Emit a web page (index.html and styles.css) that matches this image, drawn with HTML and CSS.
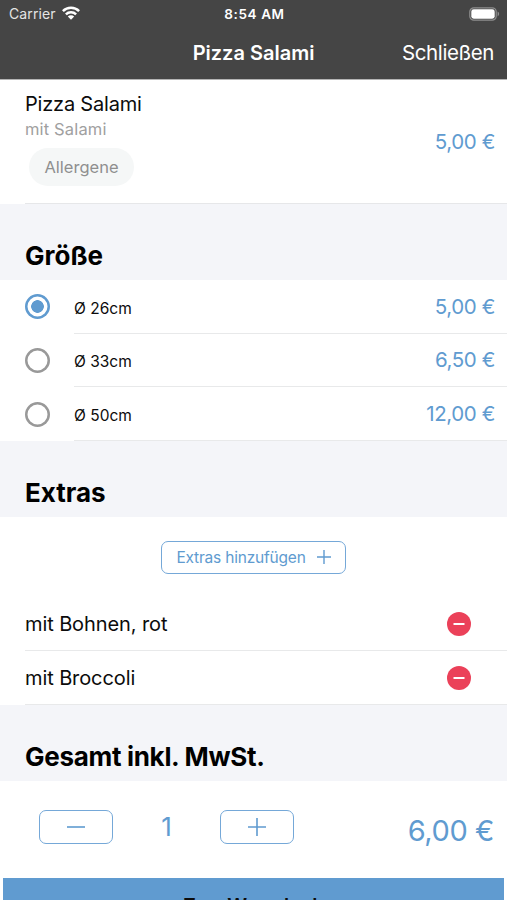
FILE: index.html
```html
<!DOCTYPE html>
<html lang="de">
  <head>
    <meta charset="UTF-8" />
    <meta name="viewport" content="width=device-width, initial-scale=1.0" />
    <title>Pizza Salami</title>
    <link rel="stylesheet" href="styles.css">
  </head>
  <body>
    <header class="header">
      <div class="status">
        <div class="carrier">
          <span>Carrier</span>
          <svg class="wifi" width="18" height="14" viewBox="0 0 18 14">
            <g fill="none" stroke="#fff" stroke-width="2.5">
              <path d="M0.9 5.1a11.5 11.5 0 0 1 16.2 0" />
              <path d="M3.9 8.4a7.3 7.3 0 0 1 10.2 0" />
            </g>
            <path d="M9 13.8 5.8 10.6a4.5 4.5 0 0 1 6.4 0z" fill="#fff" />
          </svg>
        </div>
        <span class="time">8:54 AM</span>
        <svg class="battery" width="31" height="14" viewBox="0 0 31 14">
          <rect x="0.8" y="0.8" width="26.4" height="12.4" rx="4" fill="none" stroke="#8f8f8f" stroke-width="1.2" />
          <rect x="2.3" y="2.3" width="23.4" height="9.4" rx="2.4" fill="#fff" />
          <path d="M28.6 4.6c2 .9 2 3.9 0 4.8z" fill="#8f8f8f" />
        </svg>
      </div>
      <div class="navbar">
        <h1 class="title">Pizza Salami</h1>
        <a class="close">Schließen</a>
      </div>
    </header>

    <section class="product">
      <div class="product-info">
        <h2 class="product-name">Pizza Salami</h2>
        <p class="product-text">mit Salami</p>
        <button class="allergene">Allergene</button>
      </div>
      <span class="price">5,00 €</span>
    </section>

    <h3 class="section-title">Größe</h3>
    <div class="list">
      <div class="size">
        <span class="radio checked"></span>
        <div class="size-row"><span class="size-name">Ø 26cm</span><span class="price">5,00 €</span></div>
      </div>
      <div class="size">
        <span class="radio"></span>
        <div class="size-row"><span class="size-name">Ø 33cm</span><span class="price">6,50 €</span></div>
      </div>
      <div class="size">
        <span class="radio"></span>
        <div class="size-row"><span class="size-name">Ø 50cm</span><span class="price">12,00 €</span></div>
      </div>
    </div>

    <h3 class="section-title">Extras</h3>
    <div class="list">
      <div class="add">
        <button class="btn btn-add">
          <span>Extras hinzufügen</span>
          <svg width="14" height="14" viewBox="0 0 14 14"><path d="M7 0v14M0 7h14" stroke="#609bd0" stroke-width="1.4" /></svg>
        </button>
      </div>
      <div class="extra">
        <span>mit Bohnen, rot</span>
        <svg width="24" height="24" viewBox="0 0 24 24">
          <circle cx="12" cy="12" r="12" fill="#eb4159" />
          <path d="M6.5 12h11" stroke="#fff" stroke-width="2" />
        </svg>
      </div>
      <div class="extra">
        <span>mit Broccoli</span>
        <svg width="24" height="24" viewBox="0 0 24 24">
          <circle cx="12" cy="12" r="12" fill="#eb4159" />
          <path d="M6.5 12h11" stroke="#fff" stroke-width="2" />
        </svg>
      </div>
    </div>

    <h3 class="section-title section-total">Gesamt inkl. MwSt.</h3>
    <div class="total">
      <button class="btn btn-step">
        <svg width="18" height="18" viewBox="0 0 18 18"><path d="M0 9h18" stroke="#609bd0" stroke-width="1.6" /></svg>
      </button>
      <span class="amount">1</span>
      <button class="btn btn-step">
        <svg width="18" height="18" viewBox="0 0 18 18"><path d="M9 0v18M0 9h18" stroke="#609bd0" stroke-width="1.6" /></svg>
      </button>
      <span class="total-price">6,00 €</span>
    </div>

    <button class="cart">Zum Warenkorb</button>
  </body>
</html>
```

FILE: styles.css
```css
* {
  margin: 0;
  padding: 0;
  box-sizing: border-box;
}

body {
  height: 900px;
  overflow: hidden;
  display: flex;
  flex-direction: column;
  background-color: #fff;
  color: #0c0c0c;
  font-family: Inter, "Liberation Sans", sans-serif;
}

body > * {
  flex-shrink: 0;
}

button {
  font-family: inherit;
  border: none;
  cursor: pointer;
}

.header {
  height: 80px;
  background-color: #454545;
  border-bottom: 1px solid #b4b4b4;
  color: #fff;
}

.status {
  height: 27px;
  display: grid;
  grid-template-columns: 1fr auto 1fr;
  align-items: center;
  padding: 0 7px 0 9px;
  font-size: 14px;
}

.carrier {
  display: flex;
  align-items: center;
  gap: 6px;
  color: #e4e4e4;
  letter-spacing: 0.1px;
}

.wifi {
  margin-top: -2px;
}

.time {
  font-size: 13.5px;
  font-weight: 600;
  letter-spacing: 0.6px;
}

.battery {
  justify-self: end;
}

.navbar {
  height: 50px;
  display: grid;
  grid-template-columns: 1fr auto 1fr;
  align-items: center;
  padding: 0 13px;
}

.title {
  grid-column: 2;
  padding-top: 1px;
  font-size: 20px;
  font-weight: 600;
}

.close {
  justify-self: end;
  font-size: 20.5px;
  letter-spacing: -0.4px;
}

.product {
  height: 124px;
  display: flex;
  align-items: center;
  justify-content: space-between;
  margin-left: 25px;
  padding-right: 12px;
  border-bottom: 1px solid #e6e7e9;
}

.product-info {
  padding-bottom: 6px;
}

.product-name {
  font-size: 20px;
  font-weight: 400;
  line-height: 26px;
  letter-spacing: -0.2px;
}

.product-text {
  color: #a0a0a0;
  font-size: 16.5px;
  line-height: 24px;
  letter-spacing: 0.15px;
}

.allergene {
  height: 38px;
  width: 105px;
  margin: 7px 0 0 4px;
  border-radius: 19px;
  background-color: #f5f7f7;
  color: #8f8f8f;
  font-size: 16.5px;
}

.price {
  color: #609bd0;
  font-size: 20.5px;
  letter-spacing: -0.4px;
}

.section-title {
  height: 76px;
  padding: 35px 25px 0;
  background-color: #f4f5f9;
  color: #000;
  font-size: 26px;
  font-weight: 700;
  line-height: 34px;
}

.section-total {
  letter-spacing: -0.3px;
}

.size {
  height: 53.67px;
  display: flex;
  align-items: center;
  padding-left: 25px;
  gap: 24px;
}

.radio {
  width: 25px;
  height: 25px;
  border-radius: 50%;
  box-shadow: inset 0 0 0 2.5px #999;
}

.checked {
  background: radial-gradient(circle, #609bd0 6px, #fff 6.6px);
  box-shadow: inset 0 0 0 2.5px #609bd0;
}

.size-row {
  flex: 1;
  height: 100%;
  display: flex;
  align-items: center;
  justify-content: space-between;
  padding-right: 12px;
  border-bottom: 1px solid #e8e9ea;
}

.size-name {
  padding-top: 4px;
  font-size: 15.5px;
}

.btn {
  display: flex;
  align-items: center;
  justify-content: center;
  border: 1.5px solid #75a8d8;
  border-radius: 7px;
  background-color: #fff;
  color: #609bd0;
}

.add {
  height: 80px;
  display: flex;
  justify-content: center;
  padding-top: 24px;
}

.btn-add {
  width: 185px;
  height: 33px;
  gap: 11px;
  font-size: 15.5px;
  letter-spacing: -0.2px;
}

.extra {
  height: 54px;
  display: flex;
  align-items: center;
  justify-content: space-between;
  margin-left: 25px;
  padding: 2px 36px 0 0;
  border-bottom: 1px solid #e8e9ea;
  font-size: 20px;
  letter-spacing: -0.1px;
}

.total {
  height: 97px;
  display: flex;
  align-items: center;
  padding: 0 13px 5px 39px;
  color: #609bd0;
}

.btn-step {
  width: 74px;
  height: 34px;
}

.amount {
  width: 107px;
  text-align: center;
  font-size: 26px;
}

.total-price {
  margin-left: auto;
  padding-top: 8px;
  font-size: 29px;
  letter-spacing: -0.4px;
}

.cart {
  height: 56px;
  margin: 0 3px;
  background-color: #609bd0;
  color: #0c0c0c;
  font-size: 19.5px;
  font-weight: 600;
  letter-spacing: -0.8px;
}
```
